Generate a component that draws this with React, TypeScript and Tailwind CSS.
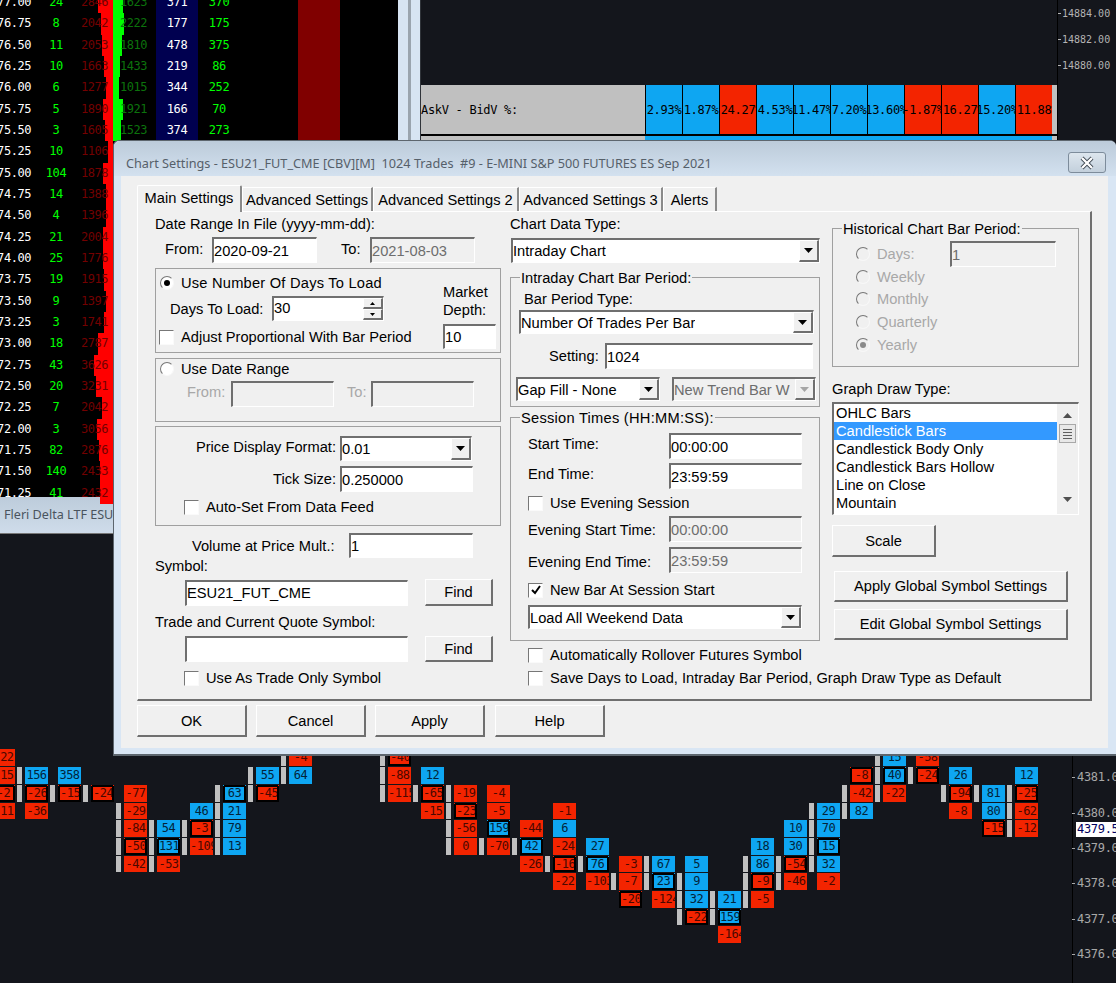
import type { ReactNode } from "react";

const mono = "font-['DejaVu_Sans_Mono',monospace]";
const ui = "font-['Noto_Sans',sans-serif]";

// price, delta, bid, ask, volume, trades
const ladder: [string, string, string, string, string, string, number, number][] = [
  ["4377.00", "24", "2846", "1623", "371", "370", 98, 123],
  ["4376.75", "8", "2042", "2222", "177", "175", 101, 124],
  ["4376.50", "11", "2053", "1810", "478", "375", 102, 122],
  ["4376.25", "10", "1663", "1433", "219", "86", 104, 120],
  ["4376.00", "6", "1277", "1015", "344", "252", 106, 119],
  ["4375.75", "5", "1890", "1921", "166", "70", 103, 123],
  ["4375.50", "3", "1605", "1523", "374", "273", 105, 121],
  ["4375.25", "10", "1106", "", "", "", 108, 113],
  ["4375.00", "104", "1878", "", "", "", 103, 113],
  ["4374.75", "14", "1388", "", "", "", 106, 113],
  ["4374.50", "4", "1396", "", "", "", 106, 113],
  ["4374.25", "21", "2004", "", "", "", 103, 113],
  ["4374.00", "25", "1776", "", "", "", 103, 113],
  ["4373.75", "19", "1915", "", "", "", 104, 113],
  ["4373.50", "9", "1397", "", "", "", 106, 113],
  ["4373.25", "3", "1741", "", "", "", 104, 113],
  ["4373.00", "18", "2787", "", "", "", 98, 113],
  ["4372.75", "43", "3626", "", "", "", 94, 113],
  ["4372.50", "20", "3231", "", "", "", 96, 113],
  ["4372.25", "7", "2042", "", "", "", 102, 113],
  ["4372.00", "3", "3056", "", "", "", 97, 113],
  ["4371.75", "82", "2876", "", "", "", 99, 113],
  ["4371.50", "140", "2433", "", "", "", 100, 113],
  ["4371.25", "41", "2432", "", "", "", 100, 113],
];

const askBid = ["2.93%", "1.87%", "-24.27%", "4.53%", "11.47%", "7.20%", "13.60%", "-1.87%", "-16.27%", "15.20%", "-11.88%"];

const rowTop = [749, 767, 785, 803, 820, 838, 856, 873, 891, 909, 926];
const rowHeight = [17, 17, 17, 16, 17, 17, 16, 17, 17, 16, 17];

// x, then [row, value, flags] : b = grey bar on the left, k = boxed cell
const footprint: [number, [number, string, string][]][] = [
  [-8, [[0, "-22", ""], [1, "-15", ""], [2, "-2", "k"], [3, "-11", ""]]],
  [25, [[1, "156", "b"], [2, "-266", "bk"], [3, "-36", ""]]],
  [58, [[1, "358", ""], [2, "-156", "bk"]]],
  [91, [[2, "-24", "bk"]]],
  [124, [[2, "-77", ""], [3, "-29", "b"], [4, "-84", "b"], [5, "-50", "bk"], [6, "-42", "b"]]],
  [157, [[4, "54", "b"], [5, "131", "bk"], [6, "-53", "b"]]],
  [190, [[3, "46", ""], [4, "-3", "bk"], [5, "-109", "b"]]],
  [223, [[2, "63", "bk"], [3, "21", "b"], [4, "79", "b"], [5, "13", "b"]]],
  [256, [[1, "55", "b"], [2, "-45", "bk"]]],
  [289, [[0, "-4", "b"], [1, "64", "b"]]],
  [388, [[0, "-40", "bk"], [1, "-88", "b"], [2, "-115", "b"]]],
  [421, [[1, "12", ""], [2, "-65", "bk"], [3, "-15", ""]]],
  [454, [[2, "-19", "b"], [3, "-231", "bk"], [4, "-56", "b"], [5, "0", "b"]]],
  [487, [[2, "-4", ""], [3, "-5", ""], [4, "159", "k"], [5, "-70", "b"]]],
  [520, [[4, "-44", ""], [5, "42", "bk"], [6, "-26", ""]]],
  [553, [[3, "-1", ""], [4, "6", ""], [5, "-24", ""], [6, "-167", "bk"], [7, "-22", ""]]],
  [586, [[5, "27", ""], [6, "76", "bk"], [7, "-103", ""]]],
  [619, [[6, "-3", ""], [7, "-7", "b"], [8, "-201", "k"]]],
  [652, [[6, "67", "b"], [7, "23", "bk"], [8, "-124", ""]]],
  [685, [[6, "5", ""], [7, "9", "b"], [8, "32", "b"], [9, "-226", "bk"]]],
  [718, [[8, "21", "b"], [9, "159", "bk"], [10, "-164", ""]]],
  [751, [[5, "18", ""], [6, "86", "b"], [7, "-9", "bk"], [8, "-5", "b"]]],
  [784, [[4, "10", ""], [5, "30", ""], [6, "-54", "bk"], [7, "-46", "b"]]],
  [817, [[3, "29", "b"], [4, "70", "b"], [5, "15", "bk"], [6, "32", "b"], [7, "-2", ""]]],
  [850, [[1, "-8", "k"], [2, "-42", "b"], [3, "82", "b"]]],
  [883, [[0, "15", "b"], [1, "40", "bk"], [2, "-22", "b"]]],
  [916, [[0, "-58", ""], [1, "-246", "bk"]]],
  [949, [[1, "26", ""], [2, "-94", "bk"], [3, "-8", ""]]],
  [982, [[2, "81", "b"], [3, "80", ""], [4, "-155", "k"]]],
  [1015, [[1, "12", ""], [2, "-25", "bk"], [3, "-62", "b"], [4, "-12", "b"]]],
];

const scaleLabels: [string, number][] = [
  ["4381.00", 777],
  ["4380.00", 813],
  ["4379.00", 848],
  ["4378.00", 883],
  ["4377.00", 919],
  ["4376.00", 954],
];

function FootCell({ x, row, value, flags }: { x: number; row: number; value: string; flags: string }) {
  const red = value.startsWith("-") || value === "0";
  const top = rowTop[row] - 534;
  const h = rowHeight[row];
  const boxed = flags.includes("k");
  return (
    <>
      {flags.includes("b") && <div className="absolute w-[5px] bg-[#c0c0c0]" style={{ left: x - 8, top, height: h }} />}
      <div
        className={`absolute w-[23px] overflow-hidden whitespace-nowrap text-center text-[12px] tracking-[-0.5px] ${mono} ${red ? "bg-[#f32400] text-[#4a0800]" : "bg-[#0ea6f2] text-[#03243a]"} ${boxed ? "border-2 border-black" : ""}`}
        style={{ left: x, top, height: h, lineHeight: boxed ? `${h - 4}px` : `${h}px` }}
      >
        {value}
      </div>
      {boxed && (
        <>
          <div className={`absolute size-px ${red ? "bg-[#f32400]" : "bg-[#0ea6f2]"}`} style={{ left: x, top }} />
          <div className={`absolute size-px ${red ? "bg-[#f32400]" : "bg-[#0ea6f2]"}`} style={{ left: x + 22, top }} />
        </>
      )}
    </>
  );
}

function Field({ value = "", disabled, className }: { value?: string; disabled?: boolean; className: string }) {
  return (
    <div
      className={`flex shrink-0 items-center overflow-hidden whitespace-nowrap border-t-2 border-l-2 border-r border-b border-t-[#6f6f6f] border-l-[#6f6f6f] border-r-white border-b-white ${disabled ? "bg-[#f0f0f0] text-[#6d6d6d]" : "bg-white text-black"} ${className}`}
    >
      {value}
    </div>
  );
}

function Arrow({ disabled }: { disabled?: boolean }) {
  return (
    <svg width="9" height="5" viewBox="0 0 9 5">
      <path d="M0 0h9L4.5 5z" fill={disabled ? "#a5a5a5" : "#000"} />
    </svg>
  );
}

function Select({ value, disabled, className }: { value: string; disabled?: boolean; className: string }) {
  return (
    <div
      className={`flex shrink-0 items-stretch justify-between border-t-2 border-l-2 border-r border-b border-t-[#6f6f6f] border-l-[#6f6f6f] border-r-white border-b-white ${disabled ? "bg-[#f0f0f0] text-[#6d6d6d]" : "bg-white text-black"} ${className}`}
    >
      <span className="flex items-center overflow-hidden whitespace-nowrap">{value}</span>
      <span className="flex w-[20px] shrink-0 items-center justify-center border-t border-l border-r-2 border-b-2 border-t-white border-l-white border-r-[#6f6f6f] border-b-[#6f6f6f] bg-[#f0f0f0]">
        <Arrow disabled={disabled} />
      </span>
    </div>
  );
}

function Btn({ children, className }: { children: ReactNode; className: string }) {
  return (
    <div className={`flex shrink-0 items-center justify-center border-t border-l border-r-2 border-b-2 border-t-white border-l-white border-r-[#6f6f6f] border-b-[#6f6f6f] bg-[#f0f0f0] ${className}`}>
      {children}
    </div>
  );
}

function Radio({ label, checked, disabled, labelClass = "" }: { label: string; checked?: boolean; disabled?: boolean; labelClass?: string }) {
  return (
    <div className="flex h-[16px] items-center gap-[7px] whitespace-nowrap">
      <span className={`flex size-[14px] shrink-0 items-center justify-center rounded-full border border-t-[#777] border-l-[#777] border-r-[#f8f8f8] border-b-[#f8f8f8] ${disabled ? "bg-[#f0f0f0]" : "bg-white"}`}>
        {checked && <span className={`size-[6px] rounded-full ${disabled ? "bg-[#8a8a8a]" : "bg-black"}`} />}
      </span>
      <span className={`${disabled ? "text-[#a8a8a8]" : ""} ${labelClass}`}>{label}</span>
    </div>
  );
}

function Check({ label, checked, className = "" }: { label: string; checked?: boolean; className?: string }) {
  return (
    <div className={`flex h-[16px] items-center gap-[7px] whitespace-nowrap ${className}`}>
      <span className="flex size-[15px] shrink-0 items-center justify-center border border-t-[#777] border-l-[#777] border-r-[#fafafa] border-b-[#fafafa] bg-white">
        {checked && (
          <svg width="10" height="10" viewBox="0 0 10 10">
            <path d="M1 5l3 3 5-7" fill="none" stroke="#000" strokeWidth="2" />
          </svg>
        )}
      </span>
      <span>{label}</span>
    </div>
  );
}

function Legend({ children }: { children: ReactNode }) {
  return <span className="absolute left-[9px] top-[-9px] h-[18px] whitespace-nowrap bg-[#f0f0f0] px-[1px] leading-[18px]">{children}</span>;
}

function LeftColumn() {
  return (
    <div className="flex w-[346px] shrink-0 flex-col">
      <div className="mt-[4px] h-[16px] leading-[16px]">Date Range In File (yyyy-mm-dd):</div>
      <div className="mt-[5px] flex h-[26px] items-center pl-[10px]">
        <span className="w-[47px] pb-[2px]">From:</span>
        <Field value="2020-09-21" className="h-[26px] w-[105px]" />
        <span className="ml-[24px] w-[29px] pb-[2px]">To:</span>
        <Field value="2021-08-03" disabled className="h-[26px] w-[105px]" />
      </div>

      <div className="mt-[5px] flex h-[85px] border border-[#a0a0a0]">
        <div className="flex w-[287px] flex-col pl-[4px] pt-[6px]">
          <Radio label="Use Number Of Days To Load" checked labelClass="tracking-[0.22px]" />
          <div className="mt-[5px] flex h-[25px] items-center pl-[10px]">
            <span className="w-[102px] pt-[1px]">Days To Load:</span>
            <div className="flex h-[25px] w-[112px] shrink-0 justify-between border-t-2 border-l-2 border-r border-b border-t-[#6f6f6f] border-l-[#6f6f6f] border-r-white border-b-white bg-white">
              <span className="leading-[20px]">30</span>
              <div className="flex w-[20px] flex-col">
                <Btn className="h-[11px] w-[20px]">
                  <svg width="5" height="3" viewBox="0 0 5 3"><path d="M0 3h5L2.5 0z" /></svg>
                </Btn>
                <Btn className="h-[11px] w-[20px]">
                  <svg width="5" height="3" viewBox="0 0 5 3"><path d="M0 0h5L2.5 3z" /></svg>
                </Btn>
              </div>
            </div>
          </div>
          <Check label="Adjust Proportional With Bar Period" className="-ml-px mt-[8px]" />
        </div>
        <div className="flex flex-col pt-[14px]">
          <span className="leading-[18px]">Market</span>
          <span className="leading-[18px]">Depth:</span>
          <Field value="10" className="mt-[5px] h-[25px] w-[53px]" />
        </div>
      </div>

      <div className="mt-[5px] flex h-[64px] flex-col border border-[#a0a0a0] pl-[4px] pt-[2px]">
        <Radio label="Use Date Range" />
        <div className="mt-[4px] flex h-[26px] items-center pl-[27px] text-[#a8a8a8]">
          <span className="w-[44px] pb-[5px]">From:</span>
          <Field disabled className="h-[26px] w-[103px]" />
          <span className="ml-[13px] w-[24px] pb-[5px]">To:</span>
          <Field disabled className="h-[26px] w-[103px]" />
        </div>
      </div>

      <div className="mt-[4px] flex h-[100px] flex-col border border-[#a0a0a0] pt-[9px]">
        <div className="flex h-[25px] items-center">
          <span className="w-[184px] whitespace-nowrap pb-[3px] pr-[4px] text-right">Price Display Format:</span>
          <Select value="0.01" className="h-[25px] w-[132px]" />
        </div>
        <div className="mt-[5px] flex h-[26px] items-center">
          <span className="w-[184px] pr-[4px] text-right">Tick Size:</span>
          <Field value="0.250000" className="h-[26px] w-[133px]" />
        </div>
        <Check label="Auto-Set From Data Feed" className="ml-[28px] mt-[7px]" />
      </div>

      <div className="mt-[7px] flex h-[25px] items-center pl-[37px]">
        <span className="w-[157px] whitespace-nowrap">Volume at Price Mult.:</span>
        <Field value="1" className="h-[25px] w-[124px]" />
      </div>
      <div className="h-[16px] leading-[16px]">Symbol:</div>
      <div className="mt-[5px] flex items-center pl-[30px]">
        <Field value="ESU21_FUT_CME" className="h-[26px] w-[223px]" />
        <Btn className="ml-[17px] h-[27px] w-[68px]">Find</Btn>
      </div>
      <div className="mt-[8px] h-[16px] leading-[16px]">Trade and Current Quote Symbol:</div>
      <div className="mt-[6px] flex items-center pl-[30px]">
        <Field className="h-[26px] w-[223px]" />
        <Btn className="ml-[17px] h-[26px] w-[68px]">Find</Btn>
      </div>
      <Check label="Use As Trade Only Symbol" className="ml-[29px] mt-[8px]" />
    </div>
  );
}

function MiddleColumn() {
  return (
    <div className="ml-[9px] flex w-[310px] shrink-0 flex-col">
      <div className="mt-[4px] h-[16px] leading-[16px]">Chart Data Type:</div>
      <Select value="Intraday Chart" className="ml-[1px] mt-[6px] h-[25px] w-[309px]" />

      <div className="relative mt-[14px] flex h-[130px] flex-col border border-[#a0a0a0]">
        <Legend>Intraday Chart Bar Period:</Legend>
        <div className="ml-[13px] mt-[13px] h-[16px] leading-[16px]">Bar Period Type:</div>
        <Select value="Number Of Trades Per Bar" className="ml-[8px] mt-[3px] h-[24px] w-[295px]" />
        <div className="mt-[9px] flex h-[26px] items-center pl-[38px]">
          <span className="w-[56px]">Setting:</span>
          <Field value="1024" className="h-[26px] w-[208px]" />
        </div>
        <div className="ml-[5px] mt-[8px] flex gap-[12px]">
          <Select value="Gap Fill - None" className="h-[24px] w-[144px]" />
          <Select value="New Trend Bar W" disabled className="h-[24px] w-[144px]" />
        </div>
      </div>

      <div className="relative mt-[10px] flex h-[224px] flex-col border border-[#a0a0a0]">
        <Legend><span className="tracking-[0.25px]">Session Times (HH:MM:SS):</span></Legend>
        <div className="mt-[15px] flex h-[26px] items-center pl-[17px]">
          <span className="w-[141px] pb-[5px]">Start Time:</span>
          <Field value="00:00:00" className="h-[26px] w-[133px]" />
        </div>
        <div className="mt-[4px] flex h-[26px] items-center pl-[17px]">
          <span className="w-[141px] pb-[4px]">End Time:</span>
          <Field value="23:59:59" className="h-[26px] w-[133px]" />
        </div>
        <Check label="Use Evening Session" className="ml-[17px] mt-[6px]" />
        <div className="mt-[5px] flex h-[26px] items-center pl-[17px]">
          <span className="w-[141px] pt-[2px]">Evening Start Time:</span>
          <Field value="00:00:00" disabled className="h-[26px] w-[133px]" />
        </div>
        <div className="mt-[5px] flex h-[26px] items-center pl-[17px]">
          <span className="w-[141px] pt-[3px]">Evening End Time:</span>
          <Field value="23:59:59" disabled className="h-[26px] w-[133px]" />
        </div>
        <Check label="New Bar At Session Start" checked className="ml-[17px] mt-[9px]" />
        <Select value="Load All Weekend Data" className="ml-[17px] mt-[7px] h-[24px] w-[274px]" />
      </div>

      <Check label="Automatically Rollover Futures Symbol" className="ml-[18px] mt-[6px]" />
      <Check label="Save Days to Load, Intraday Bar Period, Graph Draw Type as Default" className="ml-[18px] mt-[7px]" />
    </div>
  );
}

function RightColumn() {
  const list = ["OHLC Bars", "Candlestick Bars", "Candlestick Body Only", "Candlestick Bars Hollow", "Line on Close", "Mountain"];
  return (
    <div className="ml-[12px] flex w-[247px] shrink-0 flex-col">
      <div className="relative mt-[16px] flex h-[139px] flex-col border border-[#a0a0a0] pl-[23px] pt-[17px]">
        <Legend>Historical Chart Bar Period:</Legend>
        <div className="flex h-[16px] items-center">
          <div className="w-[94px]">
            <Radio label="Days:" disabled />
          </div>
          <Field value="1" disabled className="h-[26px] w-[106px]" />
        </div>
        <div className="mt-[7px]"><Radio label="Weekly" disabled /></div>
        <div className="mt-[6px]"><Radio label="Monthly" disabled /></div>
        <div className="mt-[7px]"><Radio label="Quarterly" disabled /></div>
        <div className="mt-[7px]"><Radio label="Yearly" checked disabled /></div>
      </div>

      <div className="mt-[14px] h-[16px] leading-[16px]">Graph Draw Type:</div>
      <div className="mt-[5px] flex h-[113px] w-[247px] border-t-2 border-l-2 border-r border-b border-t-[#6f6f6f] border-l-[#6f6f6f] border-r-white border-b-white bg-white">
        <div className="flex w-[223px] flex-col">
          {list.map((item) => (
            <div key={item} className={`h-[18px] pl-[2px] leading-[18px] ${item === "Candlestick Bars" ? "bg-[#3399ff] text-white" : ""}`}>
              {item}
            </div>
          ))}
        </div>
        <div className="flex w-[21px] flex-col items-center bg-[#f0f0f0] pt-[9px]">
          <svg width="9" height="5" viewBox="0 0 9 5"><path d="M0 5h9L4.5 0z" fill="#505050" /></svg>
          <div className="mt-[6px] flex h-[19px] w-[17px] flex-col items-center justify-center gap-[2px] border border-[#a8a8a8] bg-[#e8e8e8]">
            <span className="h-px w-[9px] bg-[#606060]" />
            <span className="h-px w-[9px] bg-[#606060]" />
            <span className="h-px w-[9px] bg-[#606060]" />
            <span className="h-px w-[9px] bg-[#606060]" />
          </div>
          <svg className="mt-[54px]" width="9" height="5" viewBox="0 0 9 5"><path d="M0 0h9L4.5 5z" fill="#505050" /></svg>
        </div>
      </div>

      <Btn className="mt-[10px] h-[32px] w-[104px]">Scale</Btn>
      <Btn className="ml-[2px] mt-[14px] h-[31px] w-[234px]">Apply Global Symbol Settings</Btn>
      <Btn className="ml-[2px] mt-[7px] h-[31px] w-[234px]">Edit Global Symbol Settings</Btn>
    </div>
  );
}

function Dialog() {
  const tabs: [string, string][] = [
    ["Advanced Settings", "w-[131px]"],
    ["Advanced Settings 2", "w-[146px]"],
    ["Advanced Settings 3", "w-[144px]"],
    ["Alerts", "w-[54px]"],
  ];
  return (
    <div className="absolute left-[113px] top-[140px] flex h-[616px] w-[1003px] flex-col rounded-t-[6px] border-t border-l border-b-2 border-[#5d666e] bg-[#d9e6f4] font-['Liberation_Sans',Arial,sans-serif] text-[14.67px] text-black">
      <div className="flex h-[35px] shrink-0 items-start justify-between rounded-t-[6px] bg-gradient-to-b from-[#bccbda] to-[#d3e1ef] pl-[12px] pr-[10px] pt-[11px]">
        <span className={`${ui} whitespace-pre text-[12.7px] leading-[22px] text-[#56606a]`}>
          Chart Settings - ESU21_FUT_CME [CBV][M]  1024 Trades  #9 - E-MINI S&amp;P 500 FUTURES ES Sep 2021
        </span>
        <div className="flex h-[21px] w-[38px] shrink-0 items-center justify-center rounded-[3px] border border-[#7d8c9b] bg-gradient-to-b from-[#dde6ee] to-[#c3d0dc]">
          <svg width="14" height="14" viewBox="0 0 14 14">
            <path d="M2 2l10 10M12 2L2 12" fill="none" stroke="#3c4650" strokeWidth="4" />
            <path d="M2 2l10 10M12 2L2 12" fill="none" stroke="#fff" strokeWidth="2.4" />
          </svg>
        </div>
      </div>

      <div className="ml-[7px] flex h-[572px] w-[987px] flex-col bg-[#f0f0f0]">
        <div className="ml-[16px] flex h-[35px] shrink-0 items-end">
          <div className="relative z-10 -mb-px flex h-[27px] w-[105px] items-center justify-center rounded-t-[2px] border-t border-l border-r-2 border-t-white border-l-white border-r-[#8a8a8a] bg-[#f0f0f0] pb-[3px]">
            Main Settings
          </div>
          {tabs.map(([label, width]) => (
            <div key={label} className={`flex h-[24px] items-center justify-center border-t border-l border-r-2 border-t-white border-l-white border-r-[#8a8a8a] whitespace-nowrap ${width}`}>
              {label}
            </div>
          ))}
        </div>
        <div className="ml-[16px] flex h-[490px] w-[955px] shrink-0 border-t border-l border-r-2 border-b-2 border-t-white border-l-white border-r-[#6f6f6f] border-b-[#6f6f6f] pl-[17px]">
          <LeftColumn />
          <MiddleColumn />
          <RightColumn />
        </div>
        <div className="ml-[16px] mt-[4px] flex">
          <Btn className="h-[32px] w-[110px]">OK</Btn>
          <Btn className="ml-[9px] h-[32px] w-[110px]">Cancel</Btn>
          <Btn className="ml-[9px] h-[32px] w-[110px]">Apply</Btn>
          <Btn className="ml-[10px] h-[32px] w-[110px]">Help</Btn>
        </div>
      </div>
    </div>
  );
}

function LadderWindow() {
  return (
    <div className="flex h-[534px] w-[398px] shrink-0 flex-col overflow-hidden bg-black">
      <div className={`-mt-[8px] flex h-[505px] flex-col text-[12px] tracking-[-0.45px] ${mono}`}>
        {ladder.map(([price, delta, bid, ask, vol, trades, redLeft, greenRight]) => (
          <div key={price} className="flex h-[21.33px] shrink-0 leading-[21.33px]">
            <div className="flex w-[32px] justify-end whitespace-nowrap pr-[1px] font-medium text-white">{price}</div>
            <div className="w-[48px] text-center text-[#00ff00]">{delta}</div>
            <div className="relative flex w-[33px] justify-end">
              <div className="bg-[#ff0000]" style={{ width: 113 - redLeft }} />
              <span className="absolute left-[1px] text-[#730000]">{bid}</span>
            </div>
            <div className="relative w-[43px]">
              <div className="h-full bg-[#00ff00]" style={{ width: greenRight - 113 }} />
              <span className="absolute left-[7px] top-0 text-[#0c720c]">{ask}</span>
            </div>
            <div className="w-[42px] bg-[#000050] text-center text-white">{vol}</div>
            <div className="w-[42px] text-center text-[#00ff00]">{trades}</div>
            <div className="w-[58px]" />
            <div className="w-[42px] bg-[#800000]" />
          </div>
        ))}
      </div>
      <div className={`${ui} flex h-[37px] shrink-0 items-center overflow-hidden whitespace-nowrap border-b border-[#777] bg-gradient-to-b from-[#bdccdb] to-[#cfdcea] pl-[4px] text-[12.6px] text-[#4a545e]`}>
        Fleri Delta LTF ESU
      </div>
    </div>
  );
}

function TopChartWindow() {
  return (
    <div className={`flex h-[534px] min-w-0 flex-1 border-l border-[#30343a] bg-[#14161c] text-[12px] ${mono}`}>
      <div className="flex w-[636px] shrink-0 flex-col">
        <div className="h-[85px]" />
        <div className="flex h-[49px] bg-[#c0c0c0] tracking-[-0.3px] text-black">
          <div className="flex w-[224px] items-center">AskV - BidV %:</div>
          {askBid.map((v, i) => (
            <div key={i} className={`flex w-[37px] items-center justify-center overflow-hidden whitespace-nowrap border-l border-black ${v.startsWith("-") ? "bg-[#f32400]" : "bg-[#0ea6f2]"}`}>
              <span className="shrink-0">{v}</span>
            </div>
          ))}
        </div>
        <div className="h-[2px] bg-black" />
        <div className="flex h-[20px] bg-[#c0c0c0]">
          <div className="w-[224px]" />
          <div className="w-[407px] bg-[#0ea6f2]" />
        </div>
      </div>
      <div className="flex min-w-0 flex-1 flex-col border-l border-black text-[10px] text-[#b4b4b4]">
        {["14884.00", "14882.00", "14880.00"].map((p) => (
          <div key={p} className="flex h-[26px] items-center whitespace-nowrap">
            <span className="mr-[1px] h-px w-[3px] bg-[#b4b4b4]" />
            {p}
          </div>
        ))}
      </div>
    </div>
  );
}

function BottomChart() {
  return (
    <div className={`relative h-[449px] overflow-hidden bg-[#14161c] ${mono}`}>
      {footprint.map(([x, cells]) =>
        cells.map(([row, value, flags]) => <FootCell key={`${x}-${row}`} x={x} row={row} value={value} flags={flags} />),
      )}
      <div className="absolute bottom-0 left-[1072px] top-0 w-px bg-black" />
      {scaleLabels.map(([label, y]) => (
        <div key={label} className="absolute left-[1072px] flex h-[14px] items-center whitespace-nowrap text-[12px] tracking-[-0.3px] text-[#a8a8a8]" style={{ top: y - 534 - 7 }}>
          <span className="mr-[2px] h-px w-[3px] bg-[#a8a8a8]" />
          {label}
        </div>
      ))}
      <div className="absolute left-[1076px] top-[288px] h-[15px] w-[40px] overflow-hidden whitespace-nowrap bg-white pl-[1px] text-[12px] leading-[15px] tracking-[-0.3px] text-[#000060]">4379.50</div>
    </div>
  );
}

export default function App() {
  return (
    <div className="relative h-[983px] w-[1116px] overflow-hidden bg-[#14161c]">
      <div className="flex h-[534px]">
        <LadderWindow />
        <div className="h-full w-[10px] shrink-0 bg-[#d7e4f2]" />
        <div className="h-full w-[3px] shrink-0 bg-[#9aa4ae]" />
        <div className="h-full w-[9px] shrink-0 bg-[#d7e4f2]" />
        <TopChartWindow />
      </div>
      <BottomChart />
      <Dialog />
    </div>
  );
}
